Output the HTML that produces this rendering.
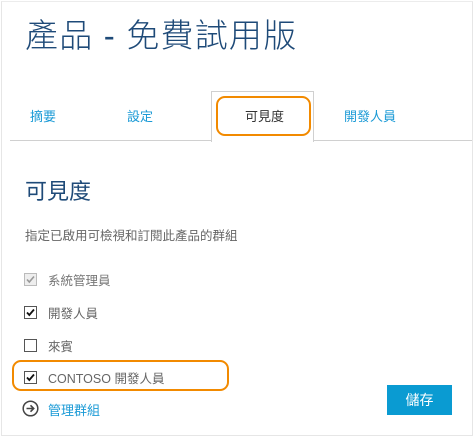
<!DOCTYPE html>
<html><head><meta charset="utf-8"><style>
body{margin:0;width:474px;height:437px;background:#fff;font-family:"Segoe UI","Liberation Sans","Noto Sans CJK TC",sans-serif;position:relative;overflow:hidden}
.a{position:absolute;white-space:nowrap}
.frame{left:1px;top:1px;width:470px;height:433px;border:1px solid #e6e6e6;border-top-color:#ececec}
.title{left:25px;top:9px;font-size:33px;color:#1e4a78;letter-spacing:1.2px;font-weight:300}
.tab{top:106px;font-size:13px;color:#1a9ad6}
.cb{left:24px;width:11px;height:11px;border:1px solid #555;background:#fff}
.lbl{left:48px;font-size:12.5px;color:#666}
.cb svg{position:absolute;left:1px;top:1px}
</style></head><body>
<div class="a frame"></div>
<div class="a title">產品 - 免費試用版</div>
<div class="a" style="left:10px;top:140px;width:462px;height:1px;background:#d0d0d0"></div>
<div class="a" style="left:211px;top:91px;width:101px;height:50px;border:1px solid #d0d0d0;border-bottom:none;background:#fff"></div>
<div class="a" style="left:216px;top:96px;width:91px;height:36px;border:2px solid #f28a00;border-radius:9px"></div>
<div class="a tab" style="left:30px">摘要</div>
<div class="a tab" style="left:127px">設定</div>
<div class="a tab" style="left:245px;color:#333">可見度</div>
<div class="a tab" style="left:344px">開發人員</div>
<div class="a" style="left:25px;top:174px;font-size:22px;color:#1e4a78">可見度</div>
<div class="a" style="left:25px;top:225px;font-size:12.5px;color:#666">指定已啟用可檢視和訂閱此產品的群組</div>
<div class="a cb" style="top:273px;border-color:#bbb;background:#eee"><svg width="9" height="9" viewBox="0 0 9 9"><path d="M1 4.5l2.3 2.5L8 1.5" fill="none" stroke="#999" stroke-width="1.6"/></svg></div>
<div class="a lbl" style="top:270px;color:#777">系統管理員</div>
<div class="a cb" style="top:306px"><svg width="9" height="9" viewBox="0 0 9 9"><path d="M1 4.5l2.3 2.5L8 1.5" fill="none" stroke="#111" stroke-width="1.8"/></svg></div>
<div class="a lbl" style="top:303px">開發人員</div>
<div class="a cb" style="top:339px"></div>
<div class="a lbl" style="top:336px">來賓</div>
<div class="a" style="left:12px;top:360px;width:213px;height:27px;border:2px solid #f28a00;border-radius:9px"></div>
<div class="a cb" style="top:371px"><svg width="9" height="9" viewBox="0 0 9 9"><path d="M1 4.5l2.3 2.5L8 1.5" fill="none" stroke="#111" stroke-width="1.8"/></svg></div>
<div class="a lbl" style="top:368px">CONTOSO 開發人員</div>
<svg class="a" style="left:22px;top:400px" width="17" height="17" viewBox="0 0 17 17"><circle cx="8.5" cy="8.5" r="7.3" fill="none" stroke="#444" stroke-width="1.5"/><path d="M4.5 8.5h7M8.5 5.3l3.2 3.2-3.2 3.2" fill="none" stroke="#444" stroke-width="1.6"/></svg>
<div class="a" style="left:48px;top:400px;font-size:13px;color:#1a9ad6">管理群組</div>
<div class="a" style="left:387px;top:385px;width:65px;height:30px;background:#0a9bd2;color:#fff;font-size:14px;text-align:center;line-height:30px">儲存</div>
</body></html>
